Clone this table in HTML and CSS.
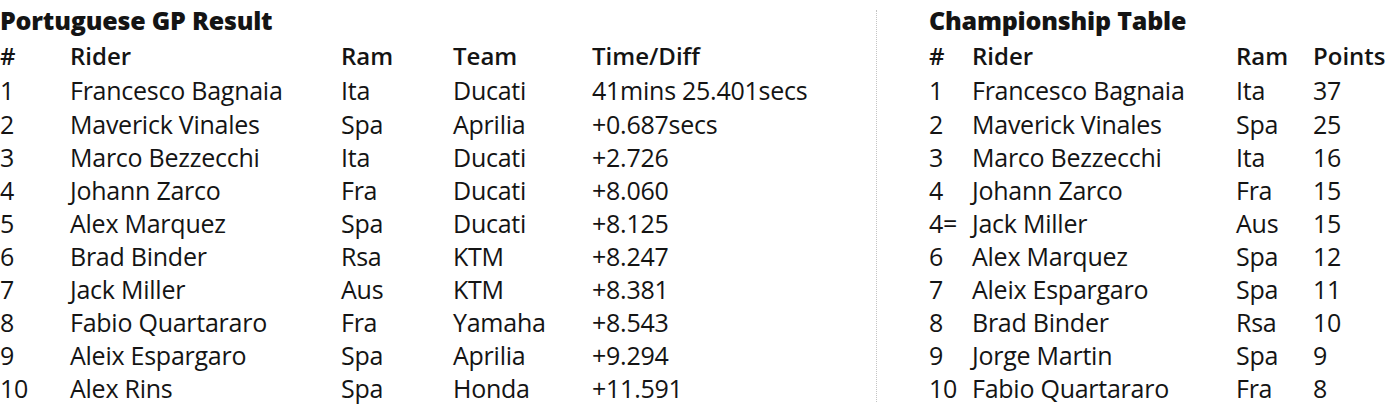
FILE: index.html
```html
<!DOCTYPE html>
<html>
<head>
<meta charset="utf-8">
<link rel="stylesheet" href="styles.css">
</head>
<body>
<div class="page">
  <section class="panel result">
    <h2 class="title">Portuguese GP Result</h2>
    <div class="grid grid-result">
      <div class="th">#</div><div class="th">Rider</div><div class="th">Ram</div><div class="th">Team</div><div class="th">Time/Diff</div>
      <div>1</div><div>Francesco Bagnaia</div><div>Ita</div><div>Ducati</div><div>41mins 25.401secs</div>
      <div>2</div><div>Maverick Vinales</div><div>Spa</div><div>Aprilia</div><div>+0.687secs</div>
      <div>3</div><div>Marco Bezzecchi</div><div>Ita</div><div>Ducati</div><div>+2.726</div>
      <div>4</div><div>Johann Zarco</div><div>Fra</div><div>Ducati</div><div>+8.060</div>
      <div>5</div><div>Alex Marquez</div><div>Spa</div><div>Ducati</div><div>+8.125</div>
      <div>6</div><div>Brad Binder</div><div>Rsa</div><div>KTM</div><div>+8.247</div>
      <div>7</div><div>Jack Miller</div><div>Aus</div><div>KTM</div><div>+8.381</div>
      <div>8</div><div>Fabio Quartararo</div><div>Fra</div><div>Yamaha</div><div>+8.543</div>
      <div>9</div><div>Aleix Espargaro</div><div>Spa</div><div>Aprilia</div><div>+9.294</div>
      <div>10</div><div>Alex Rins</div><div>Spa</div><div>Honda</div><div>+11.591</div>
    </div>
  </section>
  <section class="panel champ">
    <h2 class="title">Championship Table</h2>
    <div class="grid grid-champ">
      <div class="th">#</div><div class="th">Rider</div><div class="th">Ram</div><div class="th">Points</div>
      <div>1</div><div>Francesco Bagnaia</div><div>Ita</div><div>37</div>
      <div>2</div><div>Maverick Vinales</div><div>Spa</div><div>25</div>
      <div>3</div><div>Marco Bezzecchi</div><div>Ita</div><div>16</div>
      <div>4</div><div>Johann Zarco</div><div>Fra</div><div>15</div>
      <div>4=</div><div>Jack Miller</div><div>Aus</div><div>15</div>
      <div>6</div><div>Alex Marquez</div><div>Spa</div><div>12</div>
      <div>7</div><div>Aleix Espargaro</div><div>Spa</div><div>11</div>
      <div>8</div><div>Brad Binder</div><div>Rsa</div><div>10</div>
      <div>9</div><div>Jorge Martin</div><div>Spa</div><div>9</div>
      <div>10</div><div>Fabio Quartararo</div><div>Fra</div><div>8</div>
    </div>
  </section>
</div>
</body>
</html>
```

FILE: styles.css
```css
html, body {
  margin: 0;
  padding: 0;
  background: #ffffff;
}
body {
  font-family: "Open Sans", "Noto Sans", sans-serif;
  color: #141414;
  width: 1400px;
  height: 412px;
  overflow: hidden;
}
.page {
  display: flex;
  align-items: flex-start;
  padding-top: 3px;
}
.panel {
  box-sizing: border-box;
}
.result {
  width: 876px;
}
.champ {
  flex: 1;
  height: 392px;
  margin-top: 7px;
  padding-left: 52px;
  border-left: 1px dotted #c4c4c4;
}
.champ .title {
  margin-top: -7px;
}
.title {
  margin: 0;
  font-size: 25px;
  font-weight: 800;
  line-height: 35px;
  letter-spacing: -0.2px;
}
.grid {
  display: grid;
  font-size: 25px;
  font-weight: 400;
  letter-spacing: -0.25px;
  line-height: 33.1px;
  white-space: nowrap;
}
.grid-result {
  grid-template-columns: 70px 271px 112px 139px 1fr;
}
.grid-champ {
  grid-template-columns: 43px 264px 77px 1fr;
}
.th {
  font-size: 24px;
  font-weight: 600;
  letter-spacing: 0;
  line-height: 36.4px;
}
```
